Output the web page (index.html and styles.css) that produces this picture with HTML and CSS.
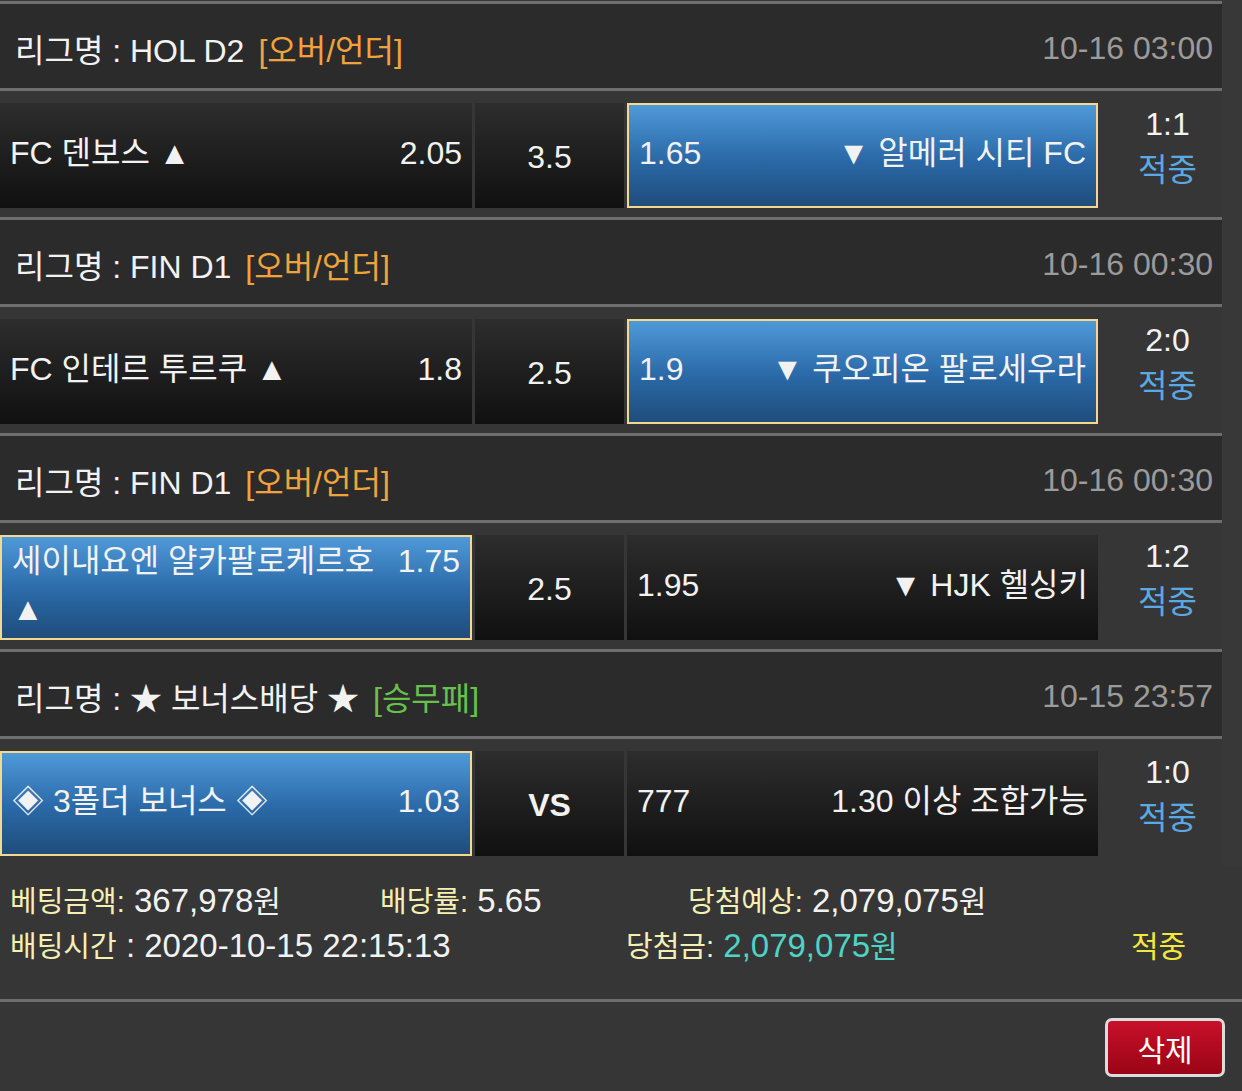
FILE: index.html
```html
<!DOCTYPE html>
<html lang="ko">
<head>
    <meta charset="UTF-8">
    <meta name="viewport" content="width=device-width, initial-scale=1.0">
    <title>배팅내역</title>
    <link rel="stylesheet" href="styles.css">
</head>
<body>
<div class="list">
    <!-- 경기 1 -->
    <div class="game">
        <div class="league">
            <span>리그명 : HOL D2</span>
            <span class="type ou">[오버/언더]</span>
            <span class="date">10-16 03:00</span>
        </div>
        <div class="match">
            <div class="cell home"><div class="line"><span class="team">FC 덴보스 ▲</span><span class="odd">2.05</span></div></div>
            <div class="cell draw">3.5</div>
            <div class="cell away picked"><div class="line"><span class="odd">1.65</span><span class="team">▼ 알메러 시티 FC</span></div></div>
            <div class="result"><div>1:1</div><div class="hit">적중</div></div>
        </div>
    </div>
    <!-- 경기 2 -->
    <div class="game">
        <div class="league">
            <span>리그명 : FIN D1</span>
            <span class="type ou">[오버/언더]</span>
            <span class="date">10-16 00:30</span>
        </div>
        <div class="match">
            <div class="cell home"><div class="line"><span class="team">FC 인테르 투르쿠 ▲</span><span class="odd">1.8</span></div></div>
            <div class="cell draw">2.5</div>
            <div class="cell away picked"><div class="line"><span class="odd">1.9</span><span class="team">▼ 쿠오피온 팔로세우라</span></div></div>
            <div class="result"><div>2:0</div><div class="hit">적중</div></div>
        </div>
    </div>
    <!-- 경기 3 -->
    <div class="game">
        <div class="league">
            <span>리그명 : FIN D1</span>
            <span class="type ou">[오버/언더]</span>
            <span class="date">10-16 00:30</span>
        </div>
        <div class="match">
            <div class="cell home picked"><div class="line"><span class="team">세이내요엔 얄카팔로케르호 ▲</span><span class="odd">1.75</span></div></div>
            <div class="cell draw">2.5</div>
            <div class="cell away"><div class="line"><span class="odd">1.95</span><span class="team">▼ HJK 헬싱키</span></div></div>
            <div class="result"><div>1:2</div><div class="hit">적중</div></div>
        </div>
    </div>
    <!-- 보너스 -->
    <div class="game">
        <div class="league">
            <span>리그명 : ★ 보너스배당 ★</span>
            <span class="type wdl">[승무패]</span>
            <span class="date">10-15 23:57</span>
        </div>
        <div class="match">
            <div class="cell home picked"><div class="line"><span class="team">◈ 3폴더 보너스 ◈</span><span class="odd">1.03</span></div></div>
            <div class="cell draw vs">VS</div>
            <div class="cell away"><div class="line"><span class="odd">777</span><span class="team">1.30 이상 조합가능</span></div></div>
            <div class="result"><div>1:0</div><div class="hit">적중</div></div>
        </div>
    </div>
</div>

<div class="summary">
    <div class="srow">
        <span class="c1"><span class="lbl">베팅금액:</span> 367,978<span class="kr">원</span></span>
        <span class="c2"><span class="lbl">배당률:</span> 5.65</span>
        <span><span class="lbl">당첨예상:</span> 2,079,075<span class="kr">원</span></span>
    </div>
    <div class="srow">
        <span class="c3"><span class="lbl">배팅시간</span> : 2020-10-15 22:15:13</span>
        <span class="c4"><span class="lbl">당첨금:</span> <span class="won">2,079,075<span class="kr">원</span></span></span>
        <span class="yes kr">적중</span>
    </div>
</div>
<div class="actions">
    <button class="btn-del">삭제</button>
</div>
</body>
</html>
```

FILE: styles.css
```css
body {
    margin: 0;
    padding-top: 1px;
    background: #383838;
    color: #f2f2f2;
    font-family: "Liberation Sans", "Noto Sans CJK KR", sans-serif;
}
.list {
    width: 1222px;
}
.game {
    border-top: 3px solid #6e6e6e;
}
.league {
    height: 84px;
    box-sizing: border-box;
    padding: 4px 9px 0 15px;
    background: #2b2b2b;
    display: flex;
    align-items: center;
    font-size: 32px;
}
.type {
    margin-left: 14px;
}
.ou {
    color: #f0a33c;
}
.wdl {
    color: #66c24b;
}
.date {
    margin-left: auto;
    color: #9b9b9b;
}
.match {
    height: 129px;
    box-sizing: border-box;
    padding: 12px 0 9px;
    border-top: 3px solid #6e6e6e;
    background: #363636;
    display: flex;
    gap: 3px;
}
.cell {
    box-sizing: border-box;
    padding: 0 10px 5px;
    display: flex;
    align-items: center;
    background: linear-gradient(#2d2d2d, #101010);
    font-size: 32px;
    line-height: 48px;
}
.home {
    width: 472px;
}
.draw {
    width: 149px;
    justify-content: center;
    padding: 2px 0 0;
}
.vs {
    font-weight: bold;
}
.away {
    width: 471px;
}
.picked {
    background: linear-gradient(#4f99d9, #2a68a6 55%, #1f4d7c);
    border: 2px solid #f3d98f;
}
.line {
    flex: 1;
    display: flex;
    justify-content: space-between;
    align-items: flex-start;
    gap: 20px;
}
.team {
    min-width: 0;
}
.odd {
    flex-shrink: 0;
}
.result {
    flex: 1;
    padding: 0 0 17px 12px;
    display: flex;
    flex-direction: column;
    align-items: center;
    justify-content: center;
    font-size: 32px;
    line-height: 46px;
}
.hit {
    color: #5aa9e2;
}
.summary {
    padding: 14px 10px 30px;
    background: #363636;
    border-bottom: 3px solid #6e6e6e;
    font-size: 33px;
    line-height: 44px;
}
.srow {
    display: flex;
    align-items: baseline;
}
.c1 {
    width: 370px;
}
.c2 {
    width: 308px;
}
.c3 {
    width: 616px;
}
.c4 {
    width: 505px;
}
.lbl {
    color: #f5efb3;
    font-size: 29px;
}
.kr {
    font-size: 30px;
}
.won {
    color: #4fd3c4;
}
.yes {
    color: #f3e83c;
}
.actions {
    height: 91px;
    box-sizing: border-box;
    padding: 16px 17px 0 0;
    background: #363636;
    display: flex;
    justify-content: flex-end;
    align-items: flex-start;
}
.btn-del {
    width: 120px;
    height: 59px;
    border: 3px solid #dcdcdc;
    border-radius: 7px;
    background: linear-gradient(#c8102a, #9a0515);
    color: #fff;
    font-family: inherit;
    font-size: 30px;
    cursor: pointer;
}
```
